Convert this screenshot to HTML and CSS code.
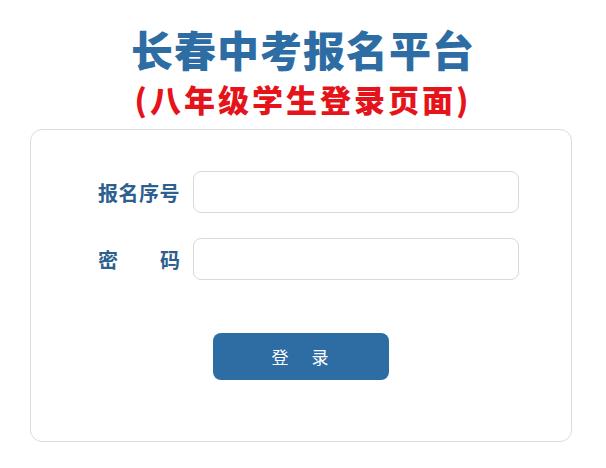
FILE: index.html
```html
<!DOCTYPE html>
<html lang="zh-CN">
<head>
  <meta charset="UTF-8">
  <meta name="viewport" content="width=device-width, initial-scale=1.0">
  <title>长春中考报名平台</title>
  <link rel="stylesheet" href="styles.css">
</head>
<body>
  <div class="header">
    <h1 class="title">长春中考报名平台</h1>
    <h2 class="subtitle">(八年级学生登录页面)</h2>
  </div>

  <div class="panel">
    <form class="login-form" onsubmit="return false;">
      <div class="row">
        <label class="label" for="bmxh">报名序号</label>
        <input type="text" class="field" id="bmxh">
      </div>
      <div class="row">
        <label class="label label-spread" for="mm"><span>密</span><span>码</span></label>
        <input type="password" class="field" id="mm">
      </div>
      <div class="actions">
        <button class="btn-login">登录</button>
      </div>
    </form>
  </div>
</body>
</html>
```

FILE: styles.css
```css
* {
  box-sizing: border-box;
}

body {
  margin: 0;
  background: #fff;
  font-family: "Noto Sans CJK SC", "Liberation Sans", sans-serif;
}

.header {
  text-align: center;
  padding-top: 19px;
}

.title {
  margin: 0;
  font-size: 42px;
  line-height: 60px;
  font-weight: 900;
  letter-spacing: 1px;
  color: #2e6ca4;
}

.subtitle {
  margin: 0;
  font-size: 31px;
  line-height: 40px;
  font-weight: 900;
  color: #e5141b;
  letter-spacing: 3px;
}

.panel {
  margin: 10px 34px 0 30px;
  height: 313px;
  border: 1px solid #dcdcdc;
  border-radius: 12px;
  padding-top: 41px;
}

.login-form {
  display: flex;
  flex-direction: column;
}

.row {
  display: flex;
  align-items: center;
  padding-left: 67px;
  margin-bottom: 25px;
}

.label {
  width: 82px;
  margin-right: 13px;
  font-size: 20px;
  font-weight: bold;
  letter-spacing: 0.5px;
  color: #2d5f8f;
}

.label-spread {
  display: flex;
  justify-content: space-between;
  letter-spacing: 0;
}

.field {
  width: 326px;
  height: 42px;
  border: 1px solid #d9d9d9;
  border-radius: 8px;
  background: #fff;
  font-size: 16px;
  padding: 0 10px;
}

.actions {
  padding-left: 182px;
  margin-top: 28px;
}

.btn-login {
  width: 176px;
  height: 47px;
  border: none;
  border-radius: 8px;
  background: #2e6ca4;
  color: #fff;
  font-size: 17px;
  letter-spacing: 23px;
  padding-left: 27px;
  font-family: "Noto Sans CJK SC", sans-serif;
  cursor: pointer;
}
```
